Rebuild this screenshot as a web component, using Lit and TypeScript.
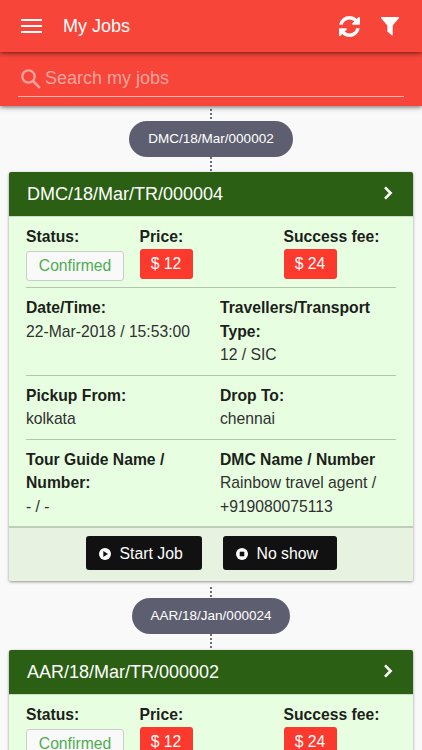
import { LitElement, html, css, svg } from "lit";
import { customElement, property } from "lit/decorators.js";

interface Job {
  group: string;
  code: string;
  price: string;
  fee: string;
}

const jobs: Job[] = [
  { group: "DMC/18/Mar/000002", code: "DMC/18/Mar/TR/000004", price: "$ 12", fee: "$ 24" },
  { group: "AAR/18/Jan/000024", code: "AAR/18/Mar/TR/000002", price: "$ 12", fee: "$ 24" },
];

@customElement("job-card")
export class JobCard extends LitElement {
  @property({ attribute: false }) job!: Job;

  static styles = css`
    :host {
      display: block;
      margin: 0 9px;
      border-radius: 2px;
      background: #e8fee1;
      box-shadow: 0 1px 3px rgba(0, 0, 0, 0.42);
      font-size: 15.7px;
      line-height: 23.6px;
      color: #303030;
      height: 409px;
    }
    * { box-sizing: border-box; }
    .head {
      display: flex;
      align-items: center;
      justify-content: space-between;
      height: 44px;
      padding: 2px 20px 0 18px;
      border-radius: 2px 2px 0 0;
      background: #2b6014;
      color: #fff;
      font-size: 18px;
    }
    .chevron { display: block; margin-top: -5px; }
    .body {
      height: 312px;
      padding: 0 17px;
      border-top: 1px solid #cbdcc6;
      border-bottom: 2px solid #c0cdb9;
    }
    .row {
      display: grid;
      grid-template-columns: 194px 1fr;
      border-bottom: 1px solid #b5c5ae;
    }
    .row:last-child { border-bottom: 0; }
    .top {
      grid-template-columns: 113.5px 144px 1fr;
      height: 71px;
      padding-top: 8px;
    }
    .when { height: 88px; padding-top: 8px; }
    .place { height: 64px; padding-top: 7.6px; }
    .who { padding-top: 7.6px; }
    .label { font-weight: bold; color: #1c1f1b; white-space: nowrap; }
    .wrap { white-space: normal; }
    .status {
      width: 98px;
      height: 30px;
      margin-top: 2.4px;
      border: 1px solid #c9cfc8;
      border-radius: 3px;
      background: #f9f9f9;
      color: #4cae50;
      line-height: 28px;
      text-align: center;
    }
    .amount {
      width: 53px;
      height: 30.5px;
      border-radius: 3px;
      background: #fb392d;
      color: #fff;
      line-height: 30px;
      text-align: center;
    }
    .foot {
      display: flex;
      justify-content: center;
      gap: 21px;
      height: 53px;
      padding-top: 8px;
      background: #e7f3e0;
      border-radius: 0 0 2px 2px;
    }
    .btn {
      display: flex;
      align-items: center;
      gap: 9px;
      width: 116px;
      height: 34px;
      padding: 2px 0 0 13px;
      border: 0;
      border-radius: 3px;
      background: #111;
      color: #fff;
      font: 15.8px "Liberation Sans", Arial, sans-serif;
      white-space: nowrap;
    }
    .noshow { width: 114px; }
    .btn svg { display: block; }
  `;

  render() {
    const j = this.job;
    return html`
      <div class="head">
        <span>${j.code}</span>
        <svg class="chevron" width="10" height="14" viewBox="0 0 10 14">
          <path d="M2 1.4 7.6 7 2 12.6" fill="none" stroke="#fff" stroke-width="2.6" />
        </svg>
      </div>
      <div class="body">
        <div class="row top">
          <div><div class="label">Status:</div><div class="status">Confirmed</div></div>
          <div><div class="label">Price:</div><div class="amount">${j.price}</div></div>
          <div><div class="label">Success fee:</div><div class="amount">${j.fee}</div></div>
        </div>
        <div class="row when">
          <div><div class="label">Date/Time:</div>22-Mar-2018 / 15:53:00</div>
          <div><div class="label wrap">Travellers/Transport Type:</div>12 / SIC</div>
        </div>
        <div class="row place">
          <div><div class="label">Pickup From:</div>kolkata</div>
          <div><div class="label">Drop To:</div>chennai</div>
        </div>
        <div class="row who">
          <div><div class="label wrap">Tour Guide Name / Number:</div>- / -</div>
          <div><div class="label">DMC Name / Number</div>Rainbow travel agent / +919080075113</div>
        </div>
      </div>
      <div class="foot">
        <button class="btn">
          <svg width="12" height="12" viewBox="0 0 12 12">
            <circle cx="6" cy="6" r="6" fill="#fff" />
            <path d="M4.3 3 9 6 4.3 9Z" fill="#111" />
          </svg>
          Start Job
        </button>
        <button class="btn noshow">
          <svg width="12" height="12" viewBox="0 0 12 12">
            <circle cx="6" cy="6" r="6" fill="#fff" />
            <rect x="3.7" y="3.7" width="4.6" height="4.6" fill="#111" />
          </svg>
          No show
        </button>
      </div>
    `;
  }
}

@customElement("app-root")
export class AppRoot extends LitElement {
  static styles = css`
    :host {
      display: block;
      height: 750px;
      overflow: hidden;
      background: #f9f9fa;
      font-family: "Liberation Sans", Arial, sans-serif;
    }
    * { box-sizing: border-box; }
    .bar {
      position: relative;
      z-index: 2;
      display: flex;
      align-items: center;
      height: 52px;
      padding: 0 22px 0 21px;
      background: #f74539;
      color: #fff;
      font-size: 18px;
      box-shadow: 0 1px 5px rgba(0, 0, 0, 0.6);
    }
    .title { flex: 1; margin-left: 21px; }
    .filter { margin-left: 20px; }
    .search {
      position: relative;
      z-index: 1;
      height: 54px;
      padding: 10px 18px 0;
      background: #f74539;
      box-shadow: 0 1px 5px rgba(0, 0, 0, 0.6);
    }
    .field {
      display: flex;
      align-items: center;
      gap: 4px;
      height: 35px;
      padding: 0 0 2px 3px;
      border-bottom: 1px solid #fcb5af;
      color: #fba49d;
      font-size: 18px;
    }
    .field svg { margin-top: 1px; }
    .group {
      display: flex;
      flex-direction: column;
      align-items: center;
    }
    .dots { height: 15px; width: 2px; margin-right: 1px; background: repeating-linear-gradient(#6b6d7b 0 2px, transparent 2px 4px); }
    .above { height: 12px; margin-top: 3px; }
    .later .above { height: 11px; margin-top: 6px; }
    .later .dots:last-child { height: 16px; }
    .pill {
      height: 36px;
      padding: 0 19px;
      border-radius: 18px;
      background: #5d5f70;
      color: #fff;
      font-size: 13.5px;
      line-height: 36px;
    }
  `;

  render() {
    return html`
      <header class="bar">
        <svg width="21" height="14" viewBox="0 0 21 14">
          ${[0, 6, 12].map((y) => svg`<rect y=${y} width="21" height="2" fill="#fff" />`)}
        </svg>
        <span class="title">My Jobs</span>
        <svg width="21" height="21" viewBox="0 0 1536 1536">
          <path fill="#fff" d="M1511 928q0 5-1 7-64 268-268 434.500T764 1536q-146 0-282.500-55T238 1324l-129 129q-19 19-45 19t-45-19-19-45V960q0-26 19-45t45-19h448q26 0 45 19t19 45-19 45l-137 137q71 66 161 102t187 36q134 0 250-65t186-179q11-17 53-117 8-23 30-23h192q13 0 22.500 9.500t9.500 22.500zM1536 128v448q0 26-19 45t-45 19h-448q-26 0-45-19t-19-45 19-45l138-138Q969 256 768 256q-134 0-250 65T332 500q-11 17-53 117-8 23-30 23H50q-13 0-22.500-9.500T18 608v-7q65-268 270-434.500T768 0q146 0 284 55.500T1297 212l130-129q19-19 45-19t45 19 19 45z" />
        </svg>
        <svg class="filter" width="20" height="20" viewBox="0 0 20 20">
          <path fill="#fff" d="M1.5 1h17q.8 0 .5.9L12.7 9.500v9q0 1.200-1 .8L7.300 15.500v-6L1 1.900Q.7 1 1.500 1Z" />
        </svg>
      </header>
      <div class="search">
        <div class="field">
          <svg width="20" height="20" viewBox="0 0 20 20">
            <circle cx="7.5" cy="7.5" r="6.2" fill="none" stroke="currentColor" stroke-width="2.3" />
            <path d="m12 12 6.800 6.800" stroke="currentColor" stroke-width="2.6" />
          </svg>
          <span>Search my jobs</span>
        </div>
      </div>
      ${jobs.map(
        (job, i) => html`
          <section class="group ${i ? "later" : ""}">
            <div class="dots above"></div>
            <div class="pill">${job.group}</div>
            <div class="dots"></div>
          </section>
          <job-card .job=${job}></job-card>
        `
      )}
    `;
  }
}
